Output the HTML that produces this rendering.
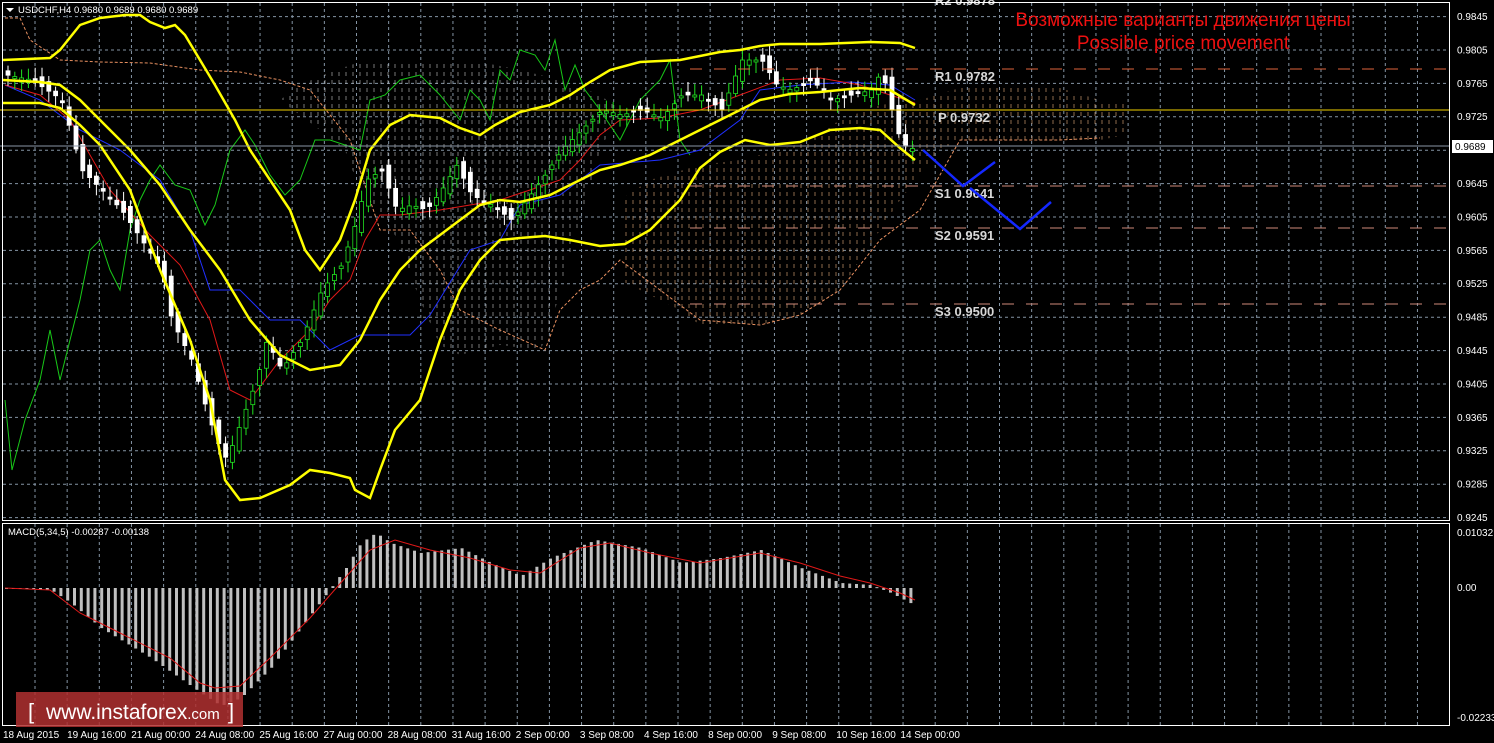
<!DOCTYPE html>
<html><head><meta charset="utf-8"><style>
html,body{margin:0;padding:0;background:#000;width:1494px;height:743px;overflow:hidden}
svg{display:block}
text{font-family:"Liberation Sans",sans-serif}
</style></head><body>
<svg id="s" width="1494" height="743" xmlns="http://www.w3.org/2000/svg">
<defs>
<pattern id="cl" width="7" height="8" patternUnits="userSpaceOnUse"><line x1="3" y1="0" x2="3" y2="4" stroke="#c8c8c8" stroke-width="1"/></pattern>
<pattern id="cl2" width="7" height="8" patternUnits="userSpaceOnUse"><line x1="3" y1="0" x2="3" y2="4" stroke="#e8b080" stroke-width="1"/></pattern>
</defs>
<rect width="1494" height="743" fill="#000"/>
<g id="grid"></g>
<polygon fill="url(#cl)" opacity="0.6" points="280,100 300,85 330,72 360,62 450,62 480,62 520,70 560,80 600,95 620,110 600,150 580,220 565,270 550,330 540,350 500,345 460,355 440,345 420,300 405,260 395,235 380,215 360,190 345,150 320,130 300,115"/>
<polygon fill="url(#cl2)" opacity="0.6" points="620,200 650,180 700,165 740,160 780,150 810,140 840,120 880,105 920,100 960,88 1000,86 1060,88 1100,100 1125,100 1125,135 1100,140 1060,140 1000,140 960,140 940,150 920,175 900,200 880,230 860,260 840,290 800,315 760,325 700,325 680,310 650,295 620,280"/>
<polyline fill="none" stroke="#e89060" stroke-dasharray="3,2" points="5,18 20,18 30,40 60,60 100,62 150,63 200,70 240,72 280,80 310,90 350,140 380,230 410,230 440,270 460,310 500,330 545,350 560,310 580,290 600,280 620,260 660,290 700,320 760,325 800,315 840,290 880,240 920,210 960,140 1000,140 1060,140 1100,138"/>
<g id="main"></g>
<line x1="690" y1="69" x2="1449" y2="69" stroke="#e0643c" stroke-dasharray="12,12"/>
<line x1="0" y1="110" x2="1449" y2="110" stroke="#f0d000"/>
<line x1="0" y1="146" x2="1449" y2="146" stroke="#8a96a6"/>
<line x1="690" y1="186" x2="1449" y2="186" stroke="#d08a7a" stroke-dasharray="12,12"/>
<line x1="690" y1="228" x2="1449" y2="228" stroke="#d08a7a" stroke-dasharray="12,12"/>
<line x1="690" y1="304" x2="1449" y2="304" stroke="#d08a7a" stroke-dasharray="12,12"/>
<g font-size="13" font-weight="bold" fill="#d8d8d8">
<text x="935" y="81" font-family="Liberation Mono,monospace">R1 0.9782</text>
<text x="938" y="122" font-family="Liberation Mono,monospace">P 0.9732</text>
<text x="935" y="198" font-family="Liberation Mono,monospace">S1 0.9641</text>
<text x="935" y="240" font-family="Liberation Mono,monospace">S2 0.9591</text>
<text x="935" y="316" font-family="Liberation Mono,monospace">S3 0.9500</text>
<text x="935" y="5" font-family="Liberation Mono,monospace">R2 0.9878</text>
</g>
<polyline fill="none" stroke="#1428ff" stroke-width="2.5" points="923,150 963,186 995,162"/>
<polyline fill="none" stroke="#1428ff" stroke-width="2.5" points="970,188 1020,229 1051,202"/>
<text x="1183" y="26" text-anchor="middle" fill="#ee1010" font-size="19">Возможные варианты движения цены</text>
<text x="1183" y="49" text-anchor="middle" fill="#ee1010" font-size="19">Possible price movement</text>
<g id="macd"></g>
<rect x="2.5" y="2.5" width="1447" height="518" fill="none" stroke="#fff"/>
<rect x="2.5" y="523.5" width="1447" height="202" fill="none" stroke="#fff"/>
<polygon points="6,8 14,8 10,12" fill="#fff"/>
<text x="18" y="13" fill="#fff" font-size="9.5">USDCHF,H4  0.9680 0.9689 0.9680 0.9689</text>
<text x="8" y="535" fill="#fff" font-size="9.5">MACD(5,34,5) -0.00287 -0.00138</text>
<g id="axis" fill="#fff" font-size="10"></g>
<rect x="1452" y="140" width="41" height="13" fill="#fff"/>
<text x="1455" y="150" fill="#000" font-size="10">0.9689</text>
<rect x="16" y="692" width="227" height="35" fill="#b03030" opacity="0.85"/>
<text x="28" y="719" fill="#fff" font-size="22">[</text>
<text x="46" y="719" fill="#fff" font-size="21">www.instaforex<tspan font-size="15">.com</tspan></text>
<text x="228" y="719" fill="#fff" font-size="22">]</text>
</svg>
<script>
(function(){
var NS="http://www.w3.org/2000/svg";
function el(p,t,a){var e=document.createElementNS(NS,t);for(var k in a)e.setAttribute(k,a[k]);document.getElementById(p).appendChild(e);return e;}
for(var x=35;x<1449;x+=32.15){el("grid","line",{x1:x,y1:3,x2:x,y2:520,stroke:"#8494a4","stroke-dasharray":"3,3"});el("grid","line",{x1:x,y1:524,x2:x,y2:725,stroke:"#8494a4","stroke-dasharray":"3,3"});}
for(var y=16.6;y<520;y+=33.4)el("grid","line",{x1:3,y1:y,x2:1449,y2:y,stroke:"#8494a4","stroke-dasharray":"3,3"});
var labs=["0.9845","0.9805","0.9765","0.9725","0.9685","0.9645","0.9605","0.9565","0.9525","0.9485","0.9445","0.9405","0.9365","0.9325","0.9285","0.9245"];
labs.forEach(function(l,i){if(i==4)return;var t=el("axis","text",{x:1457,y:20+i*33.4});t.textContent=l;});
[["0.01032",536],["0.00",591],["-0.02233",721]].forEach(function(a){var t=el("axis","text",{x:1457,y:a[1]});t.textContent=a[0];});
var dates=["18 Aug 2015","19 Aug 16:00","21 Aug 00:00","24 Aug 08:00","25 Aug 16:00","27 Aug 00:00","28 Aug 08:00","31 Aug 16:00","2 Sep 00:00","3 Sep 08:00","4 Sep 16:00","8 Sep 00:00","9 Sep 08:00","10 Sep 16:00","14 Sep 00:00"];
dates.forEach(function(d,i){var t=el("axis","text",{x:3+i*64.1,y:738});t.textContent=d;});
function interp(pts,x){if(x<=pts[0][0])return pts[0][1];for(var i=1;i<pts.length;i++){if(x<=pts[i][0]){var a=pts[i-1],b=pts[i];return a[1]+(b[1]-a[1])*(x-a[0])/(b[0]-a[0]);}}return pts[pts.length-1][1];}
function pl(pts,c,w){el("main","polyline",{points:pts.map(function(p){return p.join(",")}).join(" "),fill:"none",stroke:c,"stroke-width":w});}
var price=[[5,75],[30,80],[60,100],[80,170],[100,190],[120,210],[140,240],[160,270],[170,320],[190,360],[205,410],[215,440],[225,460],[240,420],[255,380],[265,340],[280,370],[300,340],[320,290],[340,265],[355,220],[365,180],[380,170],[395,210],[410,205],[425,210],[440,190],[455,165],[470,195],[490,205],[510,220],[525,200],[540,180],[560,150],[580,130],[600,110],[620,115],[640,110],[660,118],[680,95],[700,95],[720,110],[740,60],[760,60],[775,85],[790,90],[810,80],[830,100],[850,95],[870,90],[880,70],[890,110],[900,145],[915,150]];
pl([[5,400],[12,470],[25,420],[40,380],[50,330],[60,380],[70,340],[80,300],[90,250],[100,240],[110,270],[120,290],[130,230],[140,200],[150,180],[160,165],[175,185],[190,190],[205,225],[215,205],[230,150],[245,130],[255,145],[270,175],[285,195],[300,180],[315,140],[330,140],[345,145],[360,150],[370,100],[385,95],[400,80],[420,75],[440,95],[460,120],[470,90],[480,100],[490,120],[500,70],[510,80],[520,50],[535,55],[545,70],[555,40],[565,90],[575,65],[585,90],[600,110],[620,140],[640,100],[660,80],[670,60],[680,140],[690,155]],"#18c818",1);
pl([[5,85],[40,100],[80,130],[120,150],[160,180],[190,230],[210,290],[240,290],[270,320],[300,320],[330,350],[360,335],[410,335],[430,315],[470,250],[500,240],[520,205],[560,195],[600,165],[660,160],[700,150],[740,120],[760,90],[800,85],[850,82],[890,85],[915,100]],"#2030ff",1);
pl([[5,85],[40,95],[70,120],[110,190],[150,235],[180,265],[210,320],[230,390],[250,400],[280,360],[310,330],[330,300],[350,280],[365,240],[380,215],[400,215],[440,210],[470,205],[500,200],[530,190],[560,180],[580,160],[600,135],[620,120],[660,118],[700,110],[740,95],[780,80],[820,78],[860,85],[890,95],[915,103]],"#e01818",1);
for(var cx=6;cx<916;cx+=6.8){var c=interp(price,cx),o=interp(price,cx-6.8)+(Math.sin(cx*1.7)*6);var tp=Math.min(o,c),h=Math.max(2,Math.abs(o-c));var up=o>c;
el("main","line",{x1:cx+2,y1:tp-3-Math.abs(Math.sin(cx))*8,x2:cx+2,y2:tp+h+3+Math.abs(Math.cos(cx))*8,stroke:up?"#20e020":"#fff"});
el("main","rect",{x:cx,y:tp,width:4,height:h,fill:up?"#000":"#fff",stroke:up?"#20e020":"#fff","stroke-width":0.8});}
pl([[3,60],[50,58],[60,50],[80,25],[100,18],[125,15],[140,15],[150,22],[165,28],[175,25],[185,35],[200,60],[215,85],[235,120],[250,150],[270,180],[290,210],[305,250],[320,270],[340,240],[355,200],[370,150],[390,125],[410,115],[440,118],[460,128],[480,135],[495,125],[520,112],[550,105],[570,95],[590,82],[610,70],[640,62],[680,60],[700,56],[720,52],[740,50],[760,46],[780,44],[820,44],[870,42],[900,43],[915,48]],"#ffff00",2.5);
pl([[3,80],[40,82],[60,85],[80,100],[100,120],[130,150],[160,185],[190,230],[220,270],[250,320],[280,355],[310,370],[340,365],[360,340],[380,300],[400,270],[420,250],[440,235],[460,220],[480,205],[500,200],[520,202],[550,195],[580,180],[600,170],[620,165],[650,155],[680,140],[710,125],[740,110],[760,100],[790,94],[820,92],[860,88],[890,90],[915,105]],"#ffff00",2.5);
pl([[3,103],[40,103],[60,108],[80,125],[100,145],[130,190],[160,270],[190,340],[210,400],[225,480],[240,500],[260,498],[290,485],[310,470],[330,473],[350,478],[355,490],[370,498],[380,470],[395,430],[420,400],[440,340],[460,290],[480,260],[500,240],[520,238],[545,236],[570,240],[600,246],[625,244],[650,230],[680,200],[700,168],[720,152],[745,140],[770,145],[800,142],[830,130],[860,128],[880,130],[900,148],[915,160]],"#ffff00",2.5);
var hv=[[5,0],[50,2],[70,15],[100,40],[150,70],[200,105],[220,118],[240,110],[270,80],[300,40],[330,0],[345,-20],[360,-45],[375,-55],[390,-45],[420,-35],[460,-40],[490,-25],[520,-12],[550,-30],[595,-48],[640,-40],[680,-25],[720,-30],[760,-38],[800,-20],[840,-5],[870,-3],[890,5],[915,18]];
var sg=[[5,0],[50,2],[80,25],[120,45],[170,70],[200,95],[215,100],[240,98],[270,70],[310,30],[345,-10],[370,-38],[395,-48],[430,-38],[470,-30],[510,-18],[540,-15],[580,-40],[610,-45],[650,-35],[700,-25],[760,-35],[800,-25],[840,-12],[870,-5],[900,5],[915,12]];
for(var mx=5;mx<916;mx+=6.8){var v=interp(hv,mx);el("macd","rect",{x:mx,y:Math.min(588,588+v),width:3,height:Math.max(1,Math.abs(v)),fill:"#c0c0c0"});}
el("macd","polyline",{points:sg.map(function(p){return p[0]+","+(588+p[1])}).join(" "),fill:"none",stroke:"#e01818"});
})();
</script>
</body></html>
